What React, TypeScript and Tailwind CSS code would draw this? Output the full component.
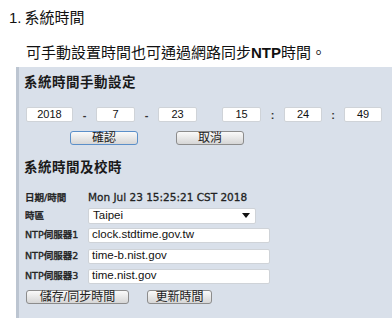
import React from "react";

const cjk = "Arial, 'Liberation Sans', 'Noto Sans CJK TC', sans-serif";

function Box({ w, v }: { w: string; v: string }) {
  return (
    <div
      className={`${w} h-[15px] bg-white border border-[#cfd3d8] rounded-[2px] flex items-center justify-center text-[11px] text-[#111]`}
    >
      {v}
    </div>
  );
}

function Sep({ c, w }: { c: string; w: string }) {
  return (
    <div className={`${w} flex items-center justify-center text-[11px] text-[#333] font-bold`}>
      {c}
    </div>
  );
}

function Btn({ w, label, focus }: { w: string; label: string; focus?: boolean }) {
  return (
    <div
      className={`${w} h-[14px] rounded-[3px] border ${
        focus ? "border-[#5b8fc9]" : "border-[#8c8c8c]"
      } bg-gradient-to-b from-[#fafafa] to-[#d6d6d6] flex items-center justify-center text-[12px] leading-none text-[#222]`}
    >
      {label}
    </div>
  );
}

function Label({ t }: { t: string }) {
  return (
    <div
      className="w-[63px] text-[9.5px] font-medium text-[#222] whitespace-nowrap leading-none"
      style={{ fontFamily: "'DejaVu Sans', 'Noto Sans CJK TC', sans-serif", WebkitTextStroke: "0.35px #222" }}
    >
      {t}
    </div>
  );
}

function Field({ v, w }: { v: string; w: string }) {
  return (
    <div
      className={`${w} h-[15px] bg-white border border-[#cfd3d8] rounded-[2px] flex items-center pl-[3px] text-[11.5px] text-[#111]`}
    >
      {v}
    </div>
  );
}

export default function App() {
  return (
    <div
      className="w-[392px] h-[318px] bg-white overflow-hidden flex flex-col"
      style={{ fontFamily: cjk }}
    >
      <div className="h-[16px] mt-[9px] pl-[9px] flex items-center text-[15px] text-[#111] leading-none">
        <span>1.</span>
        <span className="ml-[3px]">系統時間</span>
      </div>
      <div className="h-[16px] mt-[19px] pl-[26px] flex items-center text-[15px] text-[#111] leading-none whitespace-nowrap">
        可手動設置時間也可通過網路同步<span className="font-bold">NTP</span>時間。
      </div>
      <div className="mt-[7px] ml-[16px] flex-1 bg-[#d9e0ea] border-l-[3px] border-[#bcc5d1] pl-[5px] flex flex-col">
        <div className="h-[16px] mt-[8px] flex items-center text-[13.5px] font-bold text-[#1a1a1a] tracking-[0.5px]">
          系統時間手動設定
        </div>
        <div className="mt-[16px] ml-[2px] flex">
          <Box w="w-[47px]" v="2018" />
          <Sep c="-" w="w-[23px]" />
          <Box w="w-[39px]" v="7" />
          <Sep c="-" w="w-[23px]" />
          <Box w="w-[39px]" v="23" />
          <Sep c="" w="w-[25px]" />
          <Box w="w-[39px]" v="15" />
          <Sep c=":" w="w-[23px]" />
          <Box w="w-[38px]" v="24" />
          <Sep c=":" w="w-[22px]" />
          <Box w="w-[38px]" v="49" />
        </div>
        <div className="mt-[7px] ml-[46px] flex">
          <Btn w="w-[68px]" label="確認" focus />
          <div className="w-[38px]" />
          <Btn w="w-[68px]" label="取消" />
        </div>
        <div className="h-[16px] mt-[16px] flex items-center text-[13.5px] font-bold text-[#1a1a1a] tracking-[0.5px]">
          系統時間及校時
        </div>
        <div className="h-[16px] mt-[13px] ml-[1px] flex items-center">
          <Label t="日期/時間" />
          <div
            className="text-[10.5px] font-normal text-[#222] whitespace-nowrap"
            style={{ fontFamily: "'DejaVu Sans', sans-serif", WebkitTextStroke: "0.3px #222" }}
          >
            Mon Jul 23 15:25:21 CST 2018
          </div>
        </div>
        <div className="h-[16px] mt-[2px] ml-[1px] flex items-center">
          <Label t="時區" />
          <div className="w-[168px] h-[16px] bg-white border border-[#cfd3d8] rounded-[2px] flex items-center pl-[4px] pr-[5px] text-[11.5px] text-[#111]">
            <span className="flex-1">Taipei</span>
            <svg width="8" height="5" viewBox="0 0 8 5">
              <path d="M0 0 H8 L4 5 Z" fill="#111" />
            </svg>
          </div>
        </div>
        <div className="h-[15px] mt-[4px] ml-[1px] flex items-center">
          <Label t="NTP伺服器1" />
          <Field w="w-[182px]" v="clock.stdtime.gov.tw" />
        </div>
        <div className="h-[15px] mt-[6px] ml-[1px] flex items-center">
          <Label t="NTP伺服器2" />
          <Field w="w-[182px]" v="time-b.nist.gov" />
        </div>
        <div className="h-[15px] mt-[5px] ml-[1px] flex items-center">
          <Label t="NTP伺服器3" />
          <Field w="w-[182px]" v="time.nist.gov" />
        </div>
        <div className="mt-[6px] ml-[2px] flex">
          <Btn w="w-[103px]" label="儲存/同步時間" />
          <div className="w-[18px]" />
          <Btn w="w-[65px]" label="更新時間" />
        </div>
      </div>
    </div>
  );
}
